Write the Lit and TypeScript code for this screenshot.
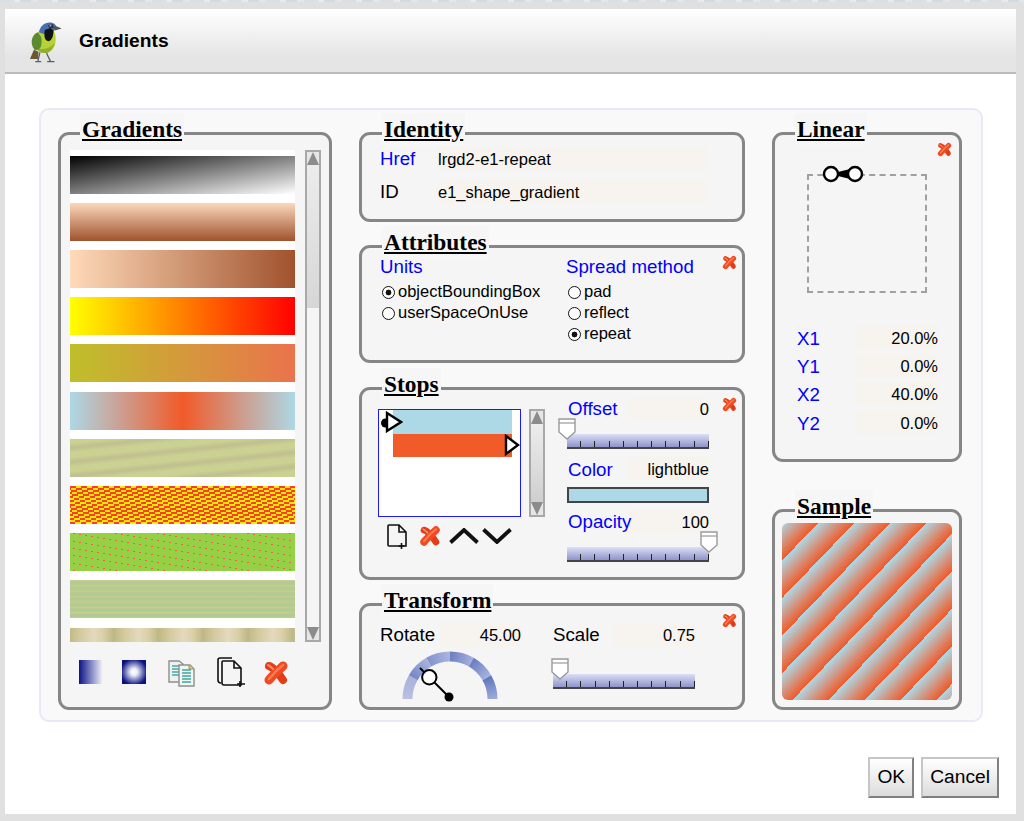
import { LitElement, css, html, svg } from 'lit';
import { customElement } from 'lit/decorators.js';

const redX = () => html`<svg class="x-svg" viewBox="0 0 26 26">
  <path d="M6 6 C10 7 17 15 20 20" fill="none" stroke="#e23c18" stroke-width="8" stroke-linecap="round" />
  <path d="M20 6 C17 9 10 15 6 20" fill="none" stroke="#ef4a22" stroke-width="9" stroke-linecap="round" />
  <path d="M20 5 C16 8 10 14 6 19" fill="none" stroke="#ff7b52" stroke-width="2.5" stroke-linecap="round" />
  <path d="M5 5 C7 6 9 8 10 9" fill="none" stroke="#ff8a64" stroke-width="2" stroke-linecap="round" />
</svg>`;

const newDoc = (w: number, h: number) => html`<svg width=${w} height=${h} viewBox="0 0 20 25">
  <path d="M6 1 H12 L19 8 V22 H2 Q1 22 1 21 V2 Q1 1 2 1 Z M12 1 V8 H19" fill="none" stroke="#111" stroke-width="1.6" />
  <path d="M14.5 19 V25 M11.5 22 H17.5" stroke="#111" stroke-width="1.6" />
</svg>`;

const scrollbar = (cls: string) => html`<div class="scroll ${cls}">
  <svg class="cap" viewBox="0 0 12 13"><path d="M6 0 L12 13 H0 Z" fill="#8c8c8c" /></svg>
  <div class="thumb-bar"></div>
  <svg class="cap down" viewBox="0 0 12 13"><path d="M6 13 L12 0 H0 Z" fill="#8c8c8c" /></svg>
</div>`;

const slider = (pos: string) => html`<div class="slider">
  <svg class="knob ${pos}" viewBox="0 0 18 22">
    <path d="M1 1 H17 V14 L9 21 L1 14 Z" fill="#fff" stroke="#9a9a9a" stroke-width="1.4" />
    <path d="M1 5 H17" stroke="#9a9a9a" stroke-width="1.2" />
  </svg>
</div>`;

const radio = (label: string, on = false) => html`<div class="radio-row">
  <span class="radio ${on ? 'on' : ''}"></span><span>${label}</span>
</div>`;

const arc = (from: number, to: number, fill: string) => {
  const p = (r: number, a: number) => {
    const t = (a * Math.PI) / 180;
    return `${(48 + r * Math.cos(t)).toFixed(2)} ${(48 - r * Math.sin(t)).toFixed(2)}`;
  };
  return svg`<path d="M${p(47.5, from)} A47.5 47.5 0 0 1 ${p(47.5, to)} L${p(37.5, to)} A37.5 37.5 0 0 0 ${p(37.5, from)} Z" fill=${fill} />`;
};

// brick rows of the red/yellow swatch
const weavePath = () => {
  let d = '';
  for (let row = 0; row < 19; row++) {
    const shift = ((-4.9 * row) % 11) + 11;
    for (let k = -2; k < 21; k++) {
      d += `M${(k * 11 + shift).toFixed(1)} ${row * 2}h5.5v2h-5.5z`;
    }
  }
  return d;
};

const dotsPath = () => {
  let d = '';
  for (let row = -6; row < 6; row++) {
    for (let x = 3.3; x < 225; x += 6) {
      const y = Math.round(row * 7.3 - 0.25 + x / 6);
      if (y >= 0 && y < 38) d += `M${x.toFixed(1)} ${y}h2v1h-2z`;
    }
  }
  return d;
};

@customElement('app-root')
export class AppRoot extends LitElement {
  private gaugeStops = [
    ['a1', '#b9c0e2', '#a9b2dc'],
    ['a2', '#7686c8', '#a8b3dd'],
    ['a3', '#8393cf', '#aab5de'],
    ['a4', '#6d80c3', '#a3afdc'],
    ['a5', '#6b7ec2', '#a6b2dd'],
    ['a6', '#6276bf', '#9dabd9'],
  ];

  render() {
    return html`
      <div class="strip"></div>
      <div class="dialog">
        <header class="head">
          <svg class="bird" viewBox="80 60 110 130">
            <path d="M88 178 L100 150 L114 156 L112 178 Z" fill="#6b5a2e" />
            <path d="M115 95 C95 112 100 155 130 160 C155 162 170 135 165 106 L160 90 Z" fill="#b5d334" />
            <path d="M108 146 C125 150 150 148 164 128 C158 150 145 161 130 160 C120 159 113 154 108 146 Z" fill="#93ad2e" />
            <path d="M112 97 C90 105 88 135 102 150 C120 155 126 135 122 112 Z" fill="#5b8a2f" />
            <path d="M115 97 C119 76 135 64 155 68 C165 71 167 78 168 85 L156 96 L130 102 Z" fill="#4a6cb0" />
            <path d="M133 90 C130 105 131 122 144 124 C155 122 159 108 159 92 L150 84 Z" fill="#121212" />
            <path d="M142 76 L158 73 L160 84 L148 86 Z" fill="#22305a" />
            <circle cx="150" cy="77" r="3" fill="#c8c82a" />
            <path d="M159 75 L184 86 L163 92 Z" fill="#565656" />
            <path d="M118 158 L112 185 M138 160 L150 185 M104 186 H122 M140 186 H162" stroke="#56606a" stroke-width="4" fill="none" />
          </svg>
          <span class="head-title">Gradients</span>
        </header>
        <div class="body">
          <div class="panel">
            ${this.renderGradients()}
            <div class="col mid">
              ${this.renderIdentity()} ${this.renderAttributes()} ${this.renderStops()} ${this.renderTransform()}
            </div>
            <div class="col right">${this.renderLinear()} ${this.renderSample()}</div>
          </div>
          <div class="footer">
            <button class="btn">OK</button>
            <button class="btn">Cancel</button>
          </div>
        </div>
      </div>
    `;
  }

  private renderGradients() {
    return html`<section class="group g-list">
      <span class="legend">Gradients</span>
      <div class="list-row">
        <div class="list">
          <div class="item i1"></div>
          <div class="item i2"></div>
          <div class="item i3"></div>
          <div class="item i4"></div>
          <div class="item i5"></div>
          <div class="item i6"></div>
          <div class="item i7"></div>
          <div class="item i8">
            <svg class="fill-svg" shape-rendering="crispEdges"><path d=${weavePath()} fill="#f5402c" /></svg>
          </div>
          <div class="item i9">
            <svg class="fill-svg" shape-rendering="crispEdges"><path d=${dotsPath()} fill="#ec6450" /></svg>
          </div>
          <div class="item i10"></div>
          <div class="item i11"></div>
        </div>
        ${scrollbar('long')}
      </div>
      <div class="list-tools">
        <svg class="tool" width="23" height="24" viewBox="0 0 23 24">
          <defs>
            <linearGradient id="lin"><stop offset="0" stop-color="#0c1486" /><stop offset="1" stop-color="#eceef8" /></linearGradient>
          </defs>
          <rect width="23" height="24" fill="url(#lin)" />
        </svg>
        <svg class="tool" width="24" height="24" viewBox="0 0 24 24">
          <defs>
            <radialGradient id="rad" r=".55"><stop offset="0" stop-color="#fff" /><stop offset=".25" stop-color="#eceef8" /><stop offset="1" stop-color="#0a1282" /></radialGradient>
          </defs>
          <rect width="24" height="24" fill="url(#rad)" />
        </svg>
        <svg class="tool" width="27" height="27" viewBox="0 0 27 27">
          <path d="M1 1 H11 L15 4 V22 H1 Z" fill="#eef2ee" stroke="#8e8e8e" stroke-width="1.4" />
          <path d="M4 6 H12 M4 9 H12 M4 12 H12 M4 15 H12" stroke="#4ea6a6" stroke-width="1.4" />
          <path d="M11 5 H22 L26 9 V26 H11 Z" fill="#f4f6f0" stroke="#8e8e8e" stroke-width="1.4" />
          <path d="M14 10 H23 M14 13 H23 M14 16 H23 M14 19 H23 M14 22 H23" stroke="#3fa5a8" stroke-width="1.4" />
          <path d="M21 5 L21 9 H26" fill="#d8c88a" stroke="#a09060" stroke-width="1" />
        </svg>
        <svg class="tool tall" width="29" height="30" viewBox="0 0 29 30">
          <path d="M4 26 Q1 26 1 23 V3 Q1 1 3 1 H15" fill="none" stroke="#111" stroke-width="1.6" />
          <path d="M6 4 H17 L24 11 V28 H7 Q5 28 5 26 V5 Q5 4 6 4 Z M17 4 V11 H24" fill="none" stroke="#111" stroke-width="1.6" />
          <path d="M23 24 V30 M20 27 H28" stroke="#111" stroke-width="1.6" />
        </svg>
        <span class="big-x">${redX()}</span>
      </div>
    </section>`;
  }

  private renderIdentity() {
    return html`<section class="group g-identity">
      <span class="legend">Identity</span>
      <div class="id-row"><span class="lbl link">Href</span><div class="field left">lrgd2-e1-repeat</div></div>
      <div class="id-row"><span class="lbl">ID</span><div class="field left">e1_shape_gradient</div></div>
    </section>`;
  }

  private renderAttributes() {
    return html`<section class="group g-attrs">
      <span class="legend">Attributes</span>
      <span class="del">${redX()}</span>
      <div class="attr-col">
        <div class="lbl link">Units</div>
        ${radio('objectBoundingBox', true)} ${radio('userSpaceOnUse')}
      </div>
      <div class="attr-col">
        <div class="lbl link">Spread method</div>
        ${radio('pad')} ${radio('reflect')} ${radio('repeat', true)}
      </div>
    </section>`;
  }

  private renderStops() {
    return html`<section class="group g-stops">
      <span class="legend">Stops</span>
      <span class="del">${redX()}</span>
      <div class="stops-left">
        <div class="stops-top">
          <div class="stop-box">
            <div class="band blue"></div>
            <div class="band orange"></div>
            <svg class="marker m1" viewBox="0 0 22 22">
              <circle cx="4.5" cy="12" r="4.5" fill="#000" />
              <path d="M6 2 L20 11 L6 20 Z" fill="#fff" stroke="#000" stroke-width="2.4" />
            </svg>
            <svg class="marker m2" viewBox="0 0 16 22">
              <path d="M2 2 L14 11 L2 20 Z" fill="#fff" stroke="#000" stroke-width="2.4" />
            </svg>
          </div>
          ${scrollbar('short')}
        </div>
        <div class="stop-tools">
          ${newDoc(20, 25)}
          <span class="mid-x">${redX()}</span>
          <svg width="30" height="16" viewBox="0 0 30 16"><path d="M1.5 14.5 L15 2 L28.5 14.5" fill="none" stroke="#111" stroke-width="3.8" /></svg>
          <svg width="30" height="16" viewBox="0 0 30 16"><path d="M1.5 1.5 L15 14 L28.5 1.5" fill="none" stroke="#111" stroke-width="3.8" /></svg>
        </div>
      </div>
      <div class="stops-right">
        <div class="val-row"><span class="lbl link">Offset</span><div class="field">0</div></div>
        <div class="slider-gap">${slider('start')}</div>
        <div class="val-row color-row"><span class="lbl link">Color</span><div class="field">lightblue</div></div>
        <div class="color-bar"></div>
        <div class="val-row opacity-row"><span class="lbl link">Opacity</span><div class="field">100</div></div>
        <div class="slider-gap">${slider('end')}</div>
      </div>
    </section>`;
  }

  private renderTransform() {
    return html`<section class="group g-transform">
      <span class="legend">Transform</span>
      <span class="del">${redX()}</span>
      <div class="tf-col">
        <div class="tf-row"><span class="lbl">Rotate</span><div class="field tf-field">45.00</div></div>
        <svg class="gauge" width="96" height="52" viewBox="0 0 96 52">
          <defs>
            ${this.gaugeStops.map(
              ([id, a, b], i) => svg`<linearGradient id=${id} gradientUnits="userSpaceOnUse"
                x1=${48 + 42 * Math.cos(((180 - i * 30) * Math.PI) / 180)} y1=${48 - 42 * Math.sin(((180 - i * 30) * Math.PI) / 180)}
                x2=${48 + 42 * Math.cos(((150 - i * 30) * Math.PI) / 180)} y2=${48 - 42 * Math.sin(((150 - i * 30) * Math.PI) / 180)}>
                <stop offset="0" stop-color=${a} /><stop offset="1" stop-color=${b} /></linearGradient>`
            )}
          </defs>
          ${this.gaugeStops.map(([id], i) => arc(180 - i * 30, 150 - i * 30, `url(#${id})`))}
          <path d="M18 17 L47 46" stroke="#000" stroke-width="2" />
          <circle cx="47" cy="46" r="4.5" fill="#000" />
          <circle cx="27.3" cy="26.3" r="7.2" fill="#fff" stroke="#000" stroke-width="2" />
        </svg>
      </div>
      <div class="tf-col scale">
        <div class="tf-row"><span class="lbl">Scale</span><div class="field scale-field">0.75</div></div>
        <div class="scale-slider">${slider('near')}</div>
      </div>
    </section>`;
  }

  private renderLinear() {
    return html`<section class="group g-linear">
      <span class="legend">Linear</span>
      <span class="del">${redX()}</span>
      <div class="vector-box">
        <svg class="vector" width="44" height="20" viewBox="0 0 44 20">
          <path d="M12 9 L28 5 V15 L12 11 Z" fill="#000" />
          <circle cx="9" cy="10" r="7" fill="#fff" stroke="#000" stroke-width="2.4" />
          <circle cx="33" cy="10" r="7" fill="#fff" stroke="#000" stroke-width="2.4" />
        </svg>
      </div>
      <div class="coords">
        <span class="lbl link">X1</span><div class="field">20.0%</div>
        <span class="lbl link">Y1</span><div class="field">0.0%</div>
        <span class="lbl link">X2</span><div class="field">40.0%</div>
        <span class="lbl link">Y2</span><div class="field">0.0%</div>
      </div>
    </section>`;
  }

  private renderSample() {
    return html`<section class="group g-sample">
      <span class="legend">Sample</span>
      <svg class="swatch" width="170" height="177">
        <defs>
          <linearGradient id="sample" x1="0.2" y1="0" x2="0.4" y2="0" spreadMethod="repeat" gradientTransform="rotate(45) scale(.75)">
            <stop offset="0" stop-color="#add8e6" />
            <stop offset="1" stop-color="#f15a29" />
          </linearGradient>
        </defs>
        <rect width="170" height="177" rx="6" fill="url(#sample)" />
      </svg>
    </section>`;
  }

  static styles = css`
    :host {
      display: block;
      height: 821px;
      overflow: hidden;
      background: #e0e0e0;
      font-family: 'Liberation Sans', Arial, sans-serif;
      color: #000;
    }

    .strip {
      height: 2px;
      background: repeating-linear-gradient(90deg, #d8e0e6 0 14px, #e8ebed 14px 20px, #d0dbe3 20px 31px, #e4e7e9 31px 38px);
    }

    .dialog {
      margin: 7px 8px 0 5px;
      height: 805px;
      background: #fff;
      display: flex;
      flex-direction: column;
    }

    .head {
      height: 63px;
      flex: none;
      display: flex;
      align-items: center;
      border-bottom: 2px solid #bbb;
      background: linear-gradient(to bottom, #fff 0, #e5e5e5 75%);
    }

    .bird {
      width: 37px;
      height: 43px;
      margin-left: 22px;
      margin-top: 1px;
    }

    .head-title {
      margin-left: 15px;
      font-size: 19.2px;
      font-weight: bold;
    }

    .body {
      padding: 34px 0 0 34px;
    }

    .panel {
      box-sizing: border-box;
      width: 944px;
      height: 614px;
      padding: 22px 17px 0;
      display: grid;
      grid-template-columns: 274px 386px 190px;
      column-gap: 27px;
      background: #f9f9f9;
      border: 2px solid #e8e8fa;
      border-radius: 10px;
    }

    .col {
      height: 578px;
      display: flex;
      flex-direction: column;
      justify-content: space-between;
    }

    .group {
      box-sizing: border-box;
      position: relative;
      border: 3px solid #868686;
      border-radius: 11px;
      background: #f5f5f5;
    }

    .legend {
      position: absolute;
      top: -22px;
      left: 20px;
      padding: 0 2px;
      height: 33px;
      line-height: 33px;
      background: #f6f6f6;
      font-family: 'Liberation Serif', 'Times New Roman', serif;
      font-size: 23.4px;
      font-weight: bold;
      text-decoration: underline;
    }

    .g-list .legend {
      left: 19px;
    }

    .lbl {
      position: relative;
      font-size: 18.7px;
      line-height: 23px;
      white-space: nowrap;
    }

    .link {
      color: #0000ff;
    }

    .field {
      height: 23px;
      line-height: 25px;
      font-size: 16.5px;
      background: #f7f3ee;
      text-align: right;
      white-space: nowrap;
    }

    .field.left {
      text-align: left;
      padding-left: 1px;
    }

    .x-svg {
      display: block;
      width: 100%;
      height: 100%;
    }

    .del {
      position: absolute;
      top: 7px;
      right: 5px;
      width: 15px;
      height: 15px;
    }

    .g-linear .del {
      right: 7px;
    }

    /* gradient list */
    .g-list {
      height: 578px;
      padding: 15px 0 0 9px;
    }

    .list-row {
      display: flex;
      gap: 10.5px;
    }

    .list {
      box-sizing: border-box;
      width: 224.5px;
      height: 492px;
      padding-top: 5.7px;
      overflow: hidden;
      background: #fff;
    }

    .item {
      height: 38px;
      margin-bottom: 9.2px;
      overflow: hidden;
    }

    .fill-svg {
      display: block;
      width: 100%;
      height: 100%;
    }

    .i1 {
      background: linear-gradient(to bottom right, #000, #fff);
    }
    .i2 {
      background: linear-gradient(to bottom, #fbd8bc, #a0522d);
    }
    .i3 {
      background: linear-gradient(to right, #ffdab9, #a0522d);
    }
    .i4 {
      background: linear-gradient(to right, #ffff00, #ff0000);
    }
    .i5 {
      background: linear-gradient(to right, #bfbf2a, #ea734c);
    }
    .i6 {
      background: linear-gradient(to right, #add8e6, #f15a29 50%, #add8e6);
    }
    .i7 {
      background: repeating-linear-gradient(174deg, #cbd291 0, #cbd291 4px, #c0bf90 9px, #cbd291 14px);
    }
    .i8 {
      background: #ffe800;
    }
    .i9 {
      background: #96d045;
    }
    .i10 {
      background: repeating-linear-gradient(180deg, #c5cf8e 0, #b9c796 2px, #aacf8e 3.4px, #c4c98f 5.4px);
    }
    .i11 {
      background: repeating-linear-gradient(90deg, #c2ba88 0, #d3ca9e 10px, #e3d9bf 24px, #d9cfa6 34px, #bab685 44.7px);
    }

    .scroll {
      box-sizing: border-box;
      width: 16px;
      flex: none;
      display: flex;
      flex-direction: column;
      border: 2px solid #a8a8a8;
      background: #f5f5f5;
    }

    .scroll.long {
      height: 492px;
    }

    .scroll.short {
      height: 108px;
    }

    .cap {
      display: block;
      width: 12px;
      height: 13px;
      flex: none;
      background: #e6e6e6;
    }

    .scroll.long .thumb-bar {
      height: 143px;
      background: linear-gradient(to bottom, #ececec, #d6d6d6);
    }

    .scroll.short .thumb-bar {
      height: 78px;
      background: linear-gradient(to bottom, #ececec, #cfcfcf);
    }

    .cap.down {
      margin-top: auto;
    }

    .list-tools {
      margin: 15px 0 0 9px;
      display: grid;
      grid-template-columns: 43px 46px 49px 46px 26px;
      align-items: start;
    }

    .tool {
      display: block;
      margin-top: 3px;
    }

    .tool.tall {
      margin-top: 0;
    }

    .big-x {
      width: 26px;
      height: 26px;
      margin-top: 3px;
    }

    /* identity */
    .g-identity {
      height: 90px;
      padding: 12px 0 0 18px;
    }

    .id-row {
      display: grid;
      grid-template-columns: 57px 271px;
      margin-bottom: 10px;
    }

    /* attributes */
    .g-attrs {
      height: 118px;
      padding: 7px 0 0 18px;
      display: grid;
      grid-template-columns: 186px 1fr;
      align-content: start;
    }

    .attr-col .lbl {
      margin-bottom: 3px;
    }

    .radio-row {
      display: flex;
      align-items: center;
      height: 21px;
      padding-left: 2px;
      gap: 3px;
      font-size: 16.5px;
    }

    .radio {
      box-sizing: border-box;
      width: 13px;
      height: 13px;
      margin-top: 1px;
      border: 1.5px solid #111;
      border-radius: 50%;
      background: #fff;
    }

    .radio.on {
      background: radial-gradient(circle, #111 0, #111 2.6px, #fff 3.2px);
    }

    /* stops */
    .g-stops {
      height: 193px;
      padding: 7px 0 0 16px;
      display: flex;
      gap: 22px;
    }

    .stops-left {
      width: 167px;
      padding-top: 12px;
    }

    .stops-top {
      display: flex;
      gap: 8px;
    }

    .stop-box {
      box-sizing: border-box;
      position: relative;
      width: 143px;
      height: 108px;
      padding: 0.5px 8.5px 0 13.5px;
      border: 1.5px solid #1a1aff;
      background: #fff;
    }

    .band {
      height: 23.5px;
    }

    .band.blue {
      background: #add8e6;
    }

    .band.orange {
      background: #f15a29;
    }

    .marker {
      position: absolute;
    }

    .marker.m1 {
      left: 2px;
      top: 1px;
      width: 22px;
      height: 22px;
    }

    .marker.m2 {
      left: 125px;
      top: 24px;
      width: 16px;
      height: 22px;
    }

    .stop-tools {
      display: flex;
      align-items: center;
      margin: 7px 0 0 9px;
    }

    .mid-x {
      width: 22px;
      height: 22px;
      margin: 0 8px 0 12px;
    }

    .stop-tools svg + svg {
      margin-left: 3px;
    }

    .stops-right {
      width: 142px;
    }

    .val-row {
      display: grid;
      grid-template-columns: 61px 81px;
      grid-auto-rows: 23px;
    }

    .val-row .lbl {
      padding-left: 1px;
      z-index: 1;
    }

    .slider-gap {
      margin-top: 14px;
    }

    .color-row {
      margin-top: 8px;
    }

    .color-row .lbl {
      line-height: 25px;
    }

    .opacity-row {
      margin-top: 7px;
    }

    .color-bar {
      box-sizing: border-box;
      height: 16px;
      margin-top: 7px;
      background: #add8e6;
      border: 2px solid #444;
    }

    .slider {
      position: relative;
      box-sizing: border-box;
      width: 142px;
      height: 15px;
      border-bottom: 2px solid #444;
      background:
        repeating-linear-gradient(90deg, transparent 0, transparent 13.2px, #222 13.2px, #222 14.17px) left bottom / 100% 6px no-repeat,
        linear-gradient(to bottom, #dcdff5, #8f94cb);
    }

    .knob {
      position: absolute;
      top: -16px;
      width: 18px;
      height: 22px;
    }

    .knob.start {
      left: -9px;
    }

    .knob.end {
      right: -9px;
    }

    .knob.near {
      left: -2px;
    }

    /* transform */
    .g-transform {
      height: 107px;
      padding: 17px 0 0 18px;
      display: flex;
      gap: 32px;
    }

    .tf-col {
      width: 141px;
    }

    .tf-col.scale {
      width: 142px;
    }

    .tf-row {
      display: flex;
      justify-content: space-between;
    }

    .tf-row .lbl {
      line-height: 24px;
    }

    .tf-row .field {
      height: 24px;
      line-height: 24px;
    }

    .tf-field {
      width: 81px;
    }

    .scale-field {
      width: 82px;
    }

    .gauge {
      display: block;
      margin: 4px 0 0 22px;
    }

    .scale-slider {
      margin-top: 27px;
    }

    /* linear */
    .g-linear {
      height: 330px;
      padding: 39px 0 0 22px;
    }

    .vector-box {
      box-sizing: border-box;
      position: relative;
      width: 120px;
      height: 119px;
      margin-left: 10px;
      border: 2px dashed #a0a0a0;
    }

    .vector {
      position: absolute;
      left: 13px;
      top: -12px;
    }

    .coords {
      margin-top: 33px;
      display: grid;
      grid-template-columns: 58px 83px;
      grid-auto-rows: 23px;
      row-gap: 5.2px;
    }

    .coords .lbl {
      line-height: 25px;
    }

    /* sample */
    .g-sample {
      height: 201px;
      padding: 11px 0 0 7px;
    }

    .swatch {
      display: block;
    }

    .footer {
      margin: 35px 17px 0 0;
      display: flex;
      justify-content: flex-end;
      gap: 7px;
    }

    .btn {
      all: unset;
      box-sizing: border-box;
      height: 41px;
      padding: 0 7px 1px;
      min-width: 46px;
      text-align: center;
      font-size: 19.2px;
      color: #000;
      border: 2px solid;
      border-color: #c6c6c6 #808080 #808080 #c6c6c6;
      background: linear-gradient(to bottom, #fff, #dcdcdc);
    }
  `;
}

declare global {
  interface HTMLElementTagNameMap {
    'app-root': AppRoot;
  }
}
